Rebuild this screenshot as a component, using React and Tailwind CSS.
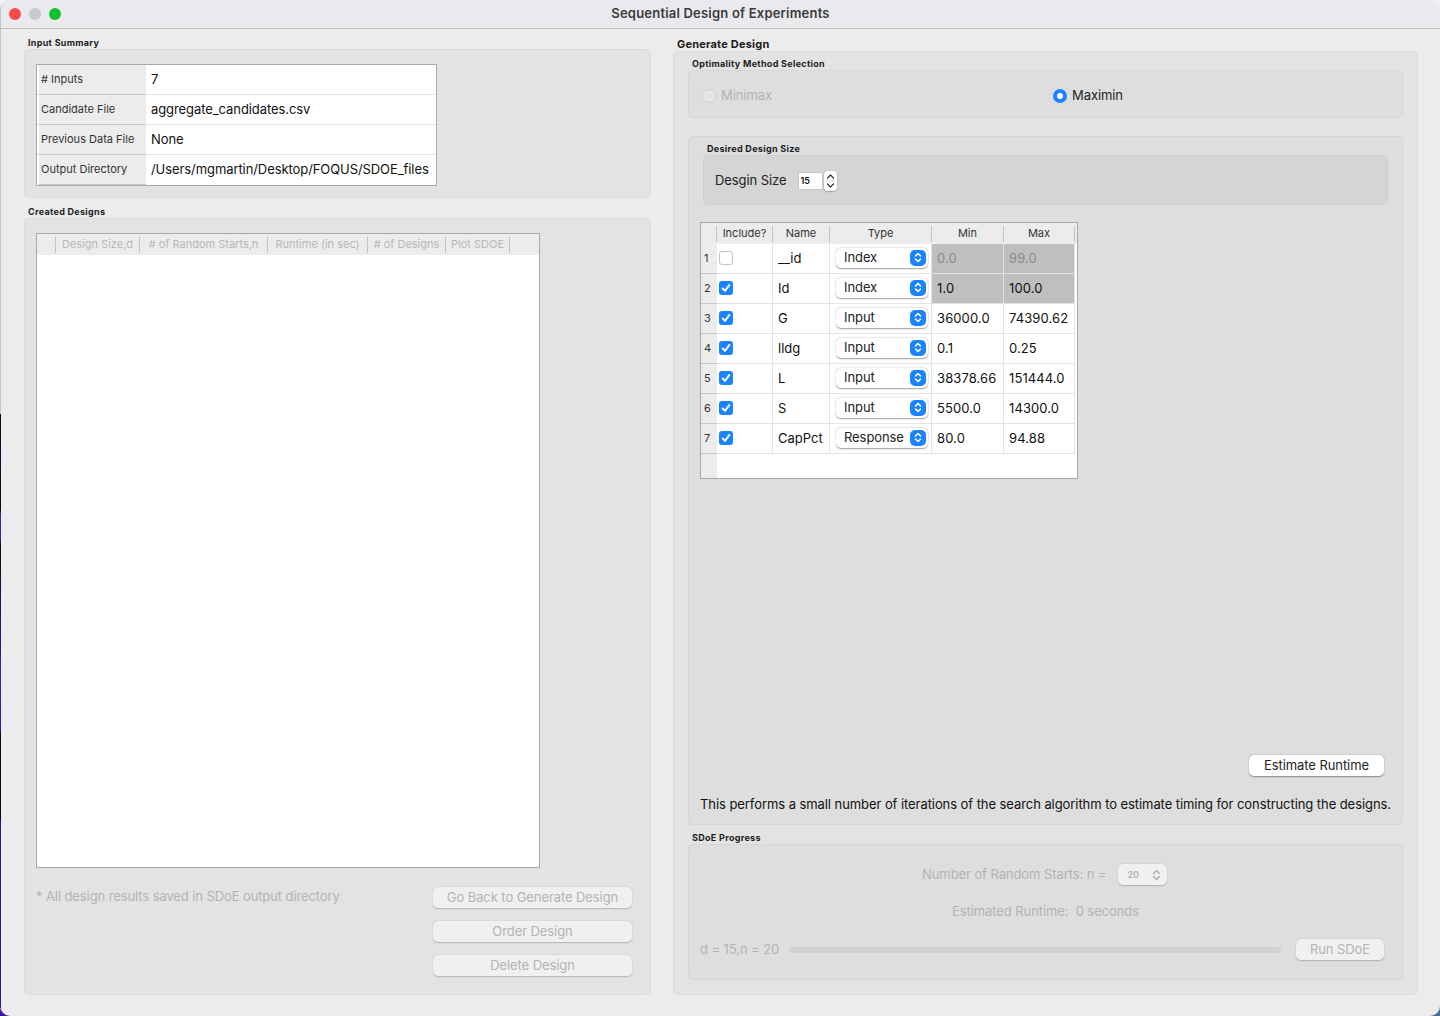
const font = "font-['Inter','Liberation_Sans',sans-serif]";

const summary = [
  ["# Inputs", "7"],
  ["Candidate File", "aggregate_candidates.csv"],
  ["Previous Data File", "None"],
  ["Output Directory", "/Users/mgmartin/Desktop/FOQUS/SDOE_files"],
];

const rows = [
  { id: 1, on: false, name: "__id", type: "Index", min: "0.0", max: "99.0", grey: true, faded: true },
  { id: 2, on: true, name: "Id", type: "Index", min: "1.0", max: "100.0", grey: true },
  { id: 3, on: true, name: "G", type: "Input", min: "36000.0", max: "74390.62" },
  { id: 4, on: true, name: "lldg", type: "Input", min: "0.1", max: "0.25" },
  { id: 5, on: true, name: "L", type: "Input", min: "38378.66", max: "151444.0" },
  { id: 6, on: true, name: "S", type: "Input", min: "5500.0", max: "14300.0" },
  { id: 7, on: true, name: "CapPct", type: "Response", min: "80.0", max: "94.88" },
];

const Label = ({ className = "", children }) => (
  <div className={`text-[9px] leading-[12px] font-bold text-[#1c1c1c] tracking-[0.3px] ${className}`}>{children}</div>
);

const Chevrons = ({ color = "white", width = 8, height = 11 }) => (
  <svg width={width} height={height} viewBox="0 0 8 11" fill="none" stroke={color} strokeWidth="1.5" strokeLinecap="round" strokeLinejoin="round">
    <path d="M1.5 4 L4 1.5 L6.5 4" />
    <path d="M1.5 7 L4 9.5 L6.5 7" />
  </svg>
);

const Check = () => (
  <div className="w-[14px] h-[14px] rounded-[3px] bg-[#1a84ff] flex items-center justify-center">
    <svg width="10" height="10" viewBox="0 0 10 10" fill="none" stroke="white" strokeWidth="1.9" strokeLinecap="round" strokeLinejoin="round">
      <path d="M1.6 5.4 L4 7.9 L8.4 1.9" />
    </svg>
  </div>
);

const Disabled = ({ className = "", children }) => (
  <div className={`h-[21px] rounded-[5px] bg-[#f0f0f0] shadow-[0_0.5px_1.5px_rgba(0,0,0,0.22)] flex items-center justify-center text-[13px] text-[#b3b3b3] ${className}`}>
    {children}
  </div>
);

function SummaryTable() {
  return (
    <div className="w-[401px] h-[122px] border border-[#a8a8a8] bg-white flex flex-col">
      {summary.map(([k, v]) => (
        <div key={k} className="h-[30px] flex border-b border-[#e4e4e4] last:border-b-transparent">
          <div className="w-[107px] ml-[2px] -mb-px bg-[#ececec] border-b border-[#c8c8c8] flex items-center pl-[2px] text-[11px] tracking-normal text-[#333]">{k}</div>
          <div className="flex-1 flex items-center pl-[5px] text-[13px] text-[#111]">{v}</div>
        </div>
      ))}
    </div>
  );
}

function DesignsTable() {
  const cols = [
    ["Design Size,d", "w-[84px]"],
    ["# of Random Starts,n", "w-[128px]"],
    ["Runtime (in sec)", "w-[100px]"],
    ["# of Designs", "w-[78px]"],
    ["Plot SDOE", "w-[65px]"],
  ];
  return (
    <div className="w-[504px] h-[635px] border border-[#a8a8a8] bg-white">
      <div className="h-[21px] bg-[#ececec] flex items-center pl-[18px]">
        {cols.map(([c, w]) => (
          <div key={c} className={`${w} h-[16px] border-l border-[#c4c4c4] flex items-center justify-center text-[11px] tracking-normal text-[#b8b8b8] last:border-r`}>{c}</div>
        ))}
      </div>
    </div>
  );
}

function TypeSelect({ value }) {
  return (
    <div className="w-[92px] h-[20px] rounded-[5px] bg-white shadow-[0_0.5px_1.5px_rgba(0,0,0,0.4)] flex items-center justify-between pl-[8px] pr-[2px] text-[13px] text-[#222]">
      {value}
      <div className="w-[16px] h-[16px] rounded-[5px] bg-[#1a84ff] flex items-center justify-center">
        <Chevrons />
      </div>
    </div>
  );
}

function VariablesTable() {
  const head = "h-[16px] flex items-center justify-center text-[11px] tracking-normal text-[#333] border-r border-[#c4c4c4]";
  const cell = "h-[30px] border-r border-b border-[#e2e2e2] flex items-center";
  const num = "tracking-[0.1px]";
  return (
    <div className="w-[378px] h-[257px] border border-[#a8a8a8] bg-white flex flex-col">
      <div className="h-[21px] bg-[#ececec] flex items-center">
        <div className={`${head} w-[16px]`} />
        <div className={`${head} w-[56px]`}>Include?</div>
        <div className={`${head} w-[57px]`}>Name</div>
        <div className={`${head} w-[102px]`}>Type</div>
        <div className={`${head} w-[72px]`}>Min</div>
        <div className={`${head} w-[71px]`}>Max</div>
      </div>
      <div className="flex-1 flex">
        <div className="w-[16px] bg-[#ececec] flex flex-col">
          {rows.map((r) => (
            <div key={r.id} className="h-[30px] border-b border-[#c8c8c8] flex items-center pl-[3px] text-[11px] text-[#333]">{r.id}</div>
          ))}
        </div>
        <div className="flex flex-col">
          {rows.map((r) => (
            <div key={r.id} className="flex h-[30px]">
              <div className={`${cell} w-[56px] pl-[2px] pb-[1px]`}>
                {r.on ? <Check /> : <div className="w-[14px] h-[14px] rounded-[3px] bg-white border border-[#c4c4c4]" />}
              </div>
              <div className={`${cell} w-[57px] pl-[5px] text-[13px] tracking-normal text-[#111]`}>{r.name}</div>
              <div className={`${cell} w-[102px] pl-[6px] pb-[2px]`}><TypeSelect value={r.type} /></div>
              <div className={`${cell} w-[72px] pl-[5px] text-[13px] ${num} ${r.grey ? "bg-[#bfbfbf]" : ""} ${r.faded ? "text-[#8a8a8a]" : "text-[#111]"}`}>{r.min}</div>
              <div className={`${cell} w-[71px] pl-[5px] text-[13px] ${num} ${r.grey ? "bg-[#bfbfbf]" : ""} ${r.faded ? "text-[#8a8a8a]" : "text-[#111]"}`}>{r.max}</div>
            </div>
          ))}
        </div>
      </div>
    </div>
  );
}

function TitleBar() {
  return (
    <div className="relative h-[29px] shrink-0 bg-[#eae9ed] border-b border-[#c0c0c0] flex items-center justify-center">
      <div className="absolute left-[8px] top-[8px] flex gap-[8px]">
        <div className="w-[12px] h-[12px] rounded-full bg-[#fc4a4a]" />
        <div className="w-[12px] h-[12px] rounded-full bg-[#cbc9cb]" />
        <div className="w-[12px] h-[12px] rounded-full bg-[#13c12e]" />
      </div>
      <span className="text-[13px] font-semibold tracking-[0.2px] text-[#3a3a3a]">Sequential Design of Experiments</span>
    </div>
  );
}

function LeftColumn() {
  return (
    <div className="w-[627px] flex flex-col">
      <Label className="ml-[4px] mt-[8px] h-[12px]">Input Summary</Label>
      <div className="h-[149px] rounded-[5px] bg-[#e3e3e3] border border-[#dcdcdc] pl-[11px] pt-[14px]">
        <SummaryTable />
      </div>
      <Label className="ml-[4px] mt-[8px] h-[12px]">Created Designs</Label>
      <div className="flex-1 mb-[21px] rounded-[5px] bg-[#e3e3e3] border border-[#dcdcdc] pl-[11px] pt-[14px] flex flex-col">
        <DesignsTable />
        <div className="mt-[19px] flex justify-between pr-[18px]">
          <div className="text-[13px] tracking-[-0.1px] leading-[18px] text-[#b3b3b3]">* All design results saved in SDoE output directory</div>
          <div className="w-[199px] flex flex-col gap-[13px]">
            <Disabled>Go Back to Generate Design</Disabled>
            <Disabled>Order Design</Disabled>
            <Disabled>Delete Design</Disabled>
          </div>
        </div>
      </div>
    </div>
  );
}

function RightColumn() {
  return (
    <div className="w-[745px] flex flex-col">
      <div className="ml-[4px] mt-[8px] h-[14px] text-[11px] leading-[14px] font-bold tracking-[0.2px] text-[#1c1c1c]">Generate Design</div>
      <div className="flex-1 mb-[21px] rounded-[5px] bg-[#e3e3e3] border border-[#dcdcdc] px-[14px] flex flex-col">
        <Label className="ml-[4px] mt-[6px] h-[12px]">Optimality Method Selection</Label>
        <div className="h-[48px] pt-[4px] rounded-[5px] bg-[#dedede] border border-[#d6d6d6] flex items-center text-[13px]">
          <div className="w-[364px] pl-[13px] flex items-center gap-[5px] text-[#b3b3b3]">
            <div className="w-[14px] h-[14px] rounded-full bg-[#e6e6e6] border border-[#d0d0d0]" />
            Minimax
          </div>
          <div className="flex items-center gap-[5px] text-[#222]">
            <div className="w-[14px] h-[14px] rounded-full bg-[#1a84ff] flex items-center justify-center">
              <div className="w-[6px] h-[6px] rounded-full bg-white" />
            </div>
            Maximin
          </div>
        </div>

        <div className="mt-[18px] h-[689px] rounded-[5px] bg-[#dedede] border border-[#d6d6d6] flex flex-col">
          <Label className="ml-[18px] mt-[6px] h-[12px]">Desired Design Size</Label>
          <div className="mx-[14px] h-[50px] pt-[2px] rounded-[5px] bg-[#d5d5d5] border border-[#cfcfcf] flex items-center pl-[11px]">
            <span className="text-[13px] text-[#222]">Desgin Size</span>
            <div className="ml-[12px] w-[25px] h-[18px] bg-white border border-[#c8c8c8] flex items-center pl-[1px] text-[9px] font-semibold text-[#111]">15</div>
            <div className="ml-[1px] w-[13px] h-[20px] rounded-[4px] bg-white shadow-[0_0.5px_1.5px_rgba(0,0,0,0.4)] flex flex-col items-center justify-center">
              <svg width="9" height="18" viewBox="0 0 9 18" fill="none" stroke="#333" strokeWidth="1.2" strokeLinecap="round" strokeLinejoin="round">
                <path d="M1.5 6 L4.5 3 L7.5 6" />
                <path d="M0 9 L9 9" stroke="#dcdcdc" strokeWidth="1" />
                <path d="M1.5 12 L4.5 15 L7.5 12" />
              </svg>
            </div>
          </div>
          <div className="ml-[11px] mt-[17px]">
            <VariablesTable />
          </div>
          <div className="flex-1 flex flex-col justify-end items-end pr-[18px]">
            <div className="w-[135px] h-[21px] rounded-[5px] bg-white shadow-[0_0.5px_1.5px_rgba(0,0,0,0.4)] flex items-center justify-center text-[13px] text-[#222]">Estimate Runtime</div>
          </div>
          <div className="ml-[11px] mt-[20px] mb-[12px] h-[16px] leading-[16px] text-[13px] tracking-[-0.07px] text-[#111] whitespace-nowrap">
            This performs a small number of iterations of the search algorithm to estimate timing for constructing the designs.
          </div>
        </div>

        <Label className="ml-[4px] mt-[7px] h-[12px]">SDoE Progress</Label>
        <div className="h-[136px] rounded-[5px] bg-[#dedede] border border-[#d6d6d6] flex flex-col text-[13px] text-[#b3b3b3]">
          <div className="mt-[19px] h-[21px] flex items-center pl-[233px]">
            Number of Random Starts: n =
            <div className="ml-[12px] w-[49px] h-[21px] rounded-[5px] bg-[#f0f0f0] shadow-[0_0.5px_1.5px_rgba(0,0,0,0.22)] flex items-center justify-between pl-[9px] pr-[6px] text-[9px] font-semibold">
              20
              <Chevrons color="#b3b3b3" width={9} height={14} />
            </div>
          </div>
          <div className="mt-[18px] h-[16px] leading-[16px] pl-[263px]">Estimated Runtime:&nbsp; 0 seconds</div>
          <div className="mt-[20px] flex items-center pl-[11px] pr-[18px]">
            <span className="w-[89px] whitespace-nowrap">d = 15,n = 20</span>
            <div className="w-[492px] h-[6px] rounded-full bg-[#d2d2d2]" />
            <Disabled className="ml-[15px] w-[88px]">Run SDoE</Disabled>
          </div>
        </div>
      </div>
    </div>
  );
}

export default function App() {
  return (
    <div className={`relative w-[1440px] h-[1016px] overflow-hidden bg-[#f3f2f5] tracking-[-0.08px] ${font}`}>
      {/* desktop wallpaper peeking out behind the window corners */}
      <div className="absolute left-0 bottom-0 w-[12px] h-[14px] bg-[#3b12a8]" />
      <div className="absolute right-0 bottom-0 w-[12px] h-[14px] bg-[#4a6a9c]" />
      <div className="relative w-full h-full bg-[#ececec] rounded-t-[10px] rounded-b-[10px] border-l border-[#c4c4c4] overflow-hidden flex flex-col">
        <TitleBar />
        <div className="flex-1 flex pl-[23px] gap-[22px] min-h-0">
          <LeftColumn />
          <RightColumn />
        </div>
      </div>
      {/* wallpaper strip along the left edge of the screen */}
      <div className="absolute left-0 top-[414px] bottom-[8px] w-px bg-[linear-gradient(to_bottom,#0a0a0a_0%,#1a0a40_7%,#0a0a0a_16%,#4a1fc0_17%,#4a1fc0_21%,#0a0a0a_22%,#3a15a0_41%,#4a1fc0_42%,#3a15a0_53%,#0a0a0a_54%,#0a0a0a_68%,#3b12a8_69%,#3b12a8_100%)]" />
    </div>
  );
}
